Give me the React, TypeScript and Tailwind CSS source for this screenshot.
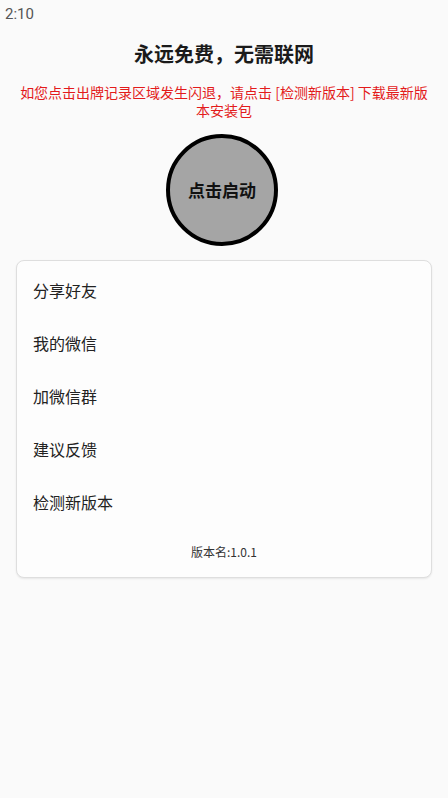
const items = ['分享好友', '我的微信', '加微信群', '建议反馈', '检测新版本']

export default function App() {
  return (
    <div
      className="w-[448px] h-[798px] bg-[#fafafa] flex flex-col text-[#1a1a1a]"
      style={{ fontFamily: '"Noto Sans CJK SC", "Noto Sans", Roboto, sans-serif' }}
    >
      {/* Status bar */}
      <div className="h-[28px] px-[5px] flex items-center text-[15px] text-[#555] font-['Roboto',sans-serif]">
        2:10
      </div>

      {/* Title */}
      <h1 className="mt-[11px] text-center text-[20px] font-bold leading-[30px]">永远免费，无需联网</h1>

      {/* Warning */}
      <p className="mt-[14px] px-[18px] text-center text-[14px] leading-[18px] text-[#e31b1b]">
        如您点击出牌记录区域发生闪退，请点击 [检测新版本] 下载最新版本安装包
      </p>

      {/* Start button */}
      <div className="mt-[15px] flex justify-center">
        <button className="w-[112px] h-[112px] rounded-full bg-[#a5a5a5] border-[4px] border-black flex items-center justify-center text-[17px] font-bold text-[#111] ml-[-4px]">
          点击启动
        </button>
      </div>

      {/* Menu card */}
      <div className="mt-[14px] mx-[16px] rounded-[8px] border border-[#dedede] bg-[#fdfdfd] shadow-[0_1px_2px_rgba(0,0,0,0.08)] pt-[18px] pb-[17px]">
        {items.map(t => (
          <div key={t} className="h-[53px] px-[16px] flex items-start text-[16px] leading-[22px] text-[#222]">
            {t}
          </div>
        ))}
        <p className="text-center text-[12px] leading-[16px] text-[#333]">版本名:1.0.1</p>
      </div>
    </div>
  )
}
